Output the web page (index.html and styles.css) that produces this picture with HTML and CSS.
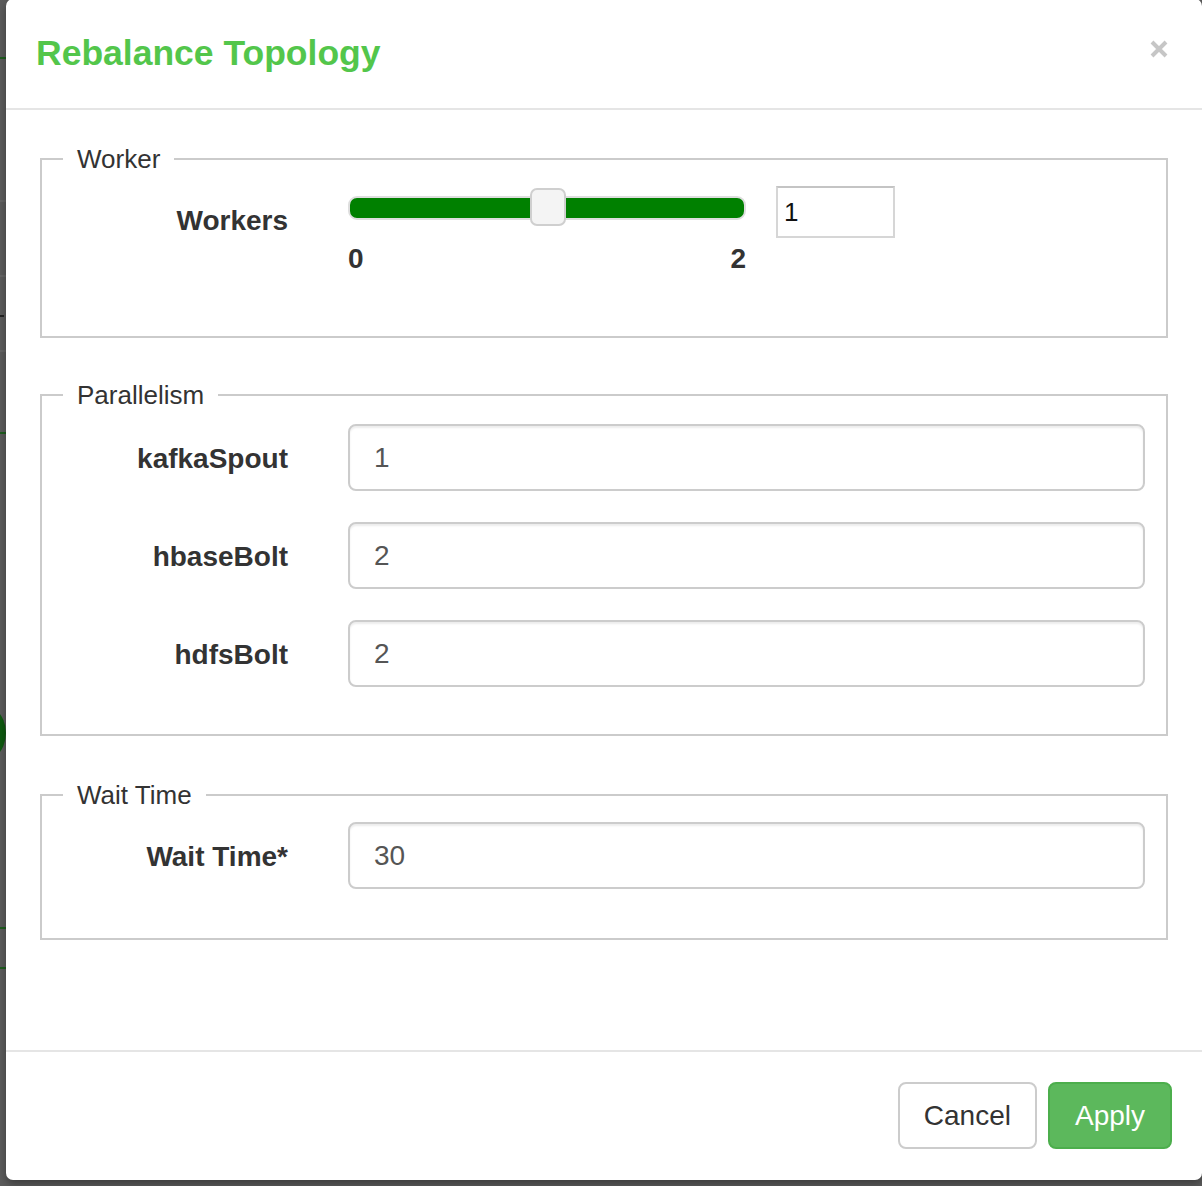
FILE: index.html
```html
<!DOCTYPE html>
<html lang="en">
<head>
<meta charset="utf-8">
<title>Rebalance Topology</title>
<link rel="stylesheet" href="styles.css">
</head>
<body>
<div class="backdrop" aria-hidden="true">
  <span class="bg-mark bg-green" style="top:57px"></span>
  <span class="bg-mark bg-light" style="top:200px"></span>
  <span class="bg-mark bg-light" style="top:275px"></span>
  <span class="bg-mark bg-black" style="top:315px"></span>
  <span class="bg-mark bg-light" style="top:350px"></span>
  <span class="bg-mark bg-green" style="top:432px"></span>
  <span class="bg-blob"></span>
  <span class="bg-mark bg-green" style="top:927px"></span>
  <span class="bg-mark bg-green" style="top:967px"></span>
</div>

<div class="modal" role="dialog">
  <div class="modal-header">
    <h4 class="modal-title">Rebalance Topology</h4>
    <button class="close" type="button" aria-label="Close">
      <svg width="18" height="18" viewBox="0 0 18 18"><path d="M2 2 L16 16 M16 2 L2 16" stroke="#c6c6c6" stroke-width="4" stroke-linecap="butt"/></svg>
    </button>
  </div>

  <div class="modal-body">
    <fieldset class="fs fs-worker">
      <legend>Worker</legend>
      <div class="worker-row">
        <label class="ctl-label">Workers</label>
        <div class="slider">
          <div class="slider-track"><span class="slider-handle"></span></div>
          <div class="slider-scale"><span>0</span><span>2</span></div>
        </div>
        <input class="num-input" type="text" value="1">
      </div>
    </fieldset>

    <fieldset class="fs fs-parallel">
      <legend>Parallelism</legend>
      <div class="form-rows">
        <div class="form-row">
          <label class="ctl-label">kafkaSpout</label>
          <input class="form-control" type="text" value="1">
        </div>
        <div class="form-row">
          <label class="ctl-label">hbaseBolt</label>
          <input class="form-control" type="text" value="2">
        </div>
        <div class="form-row">
          <label class="ctl-label">hdfsBolt</label>
          <input class="form-control" type="text" value="2">
        </div>
      </div>
    </fieldset>

    <fieldset class="fs fs-wait">
      <legend>Wait Time</legend>
      <div class="form-row">
        <label class="ctl-label">Wait Time*</label>
        <input class="form-control" type="text" value="30">
      </div>
    </fieldset>
  </div>

  <div class="modal-footer">
    <button class="btn btn-default" type="button">Cancel</button>
    <button class="btn btn-success" type="button">Apply</button>
  </div>
</div>
</body>
</html>
```
FILE: styles.css
```css
html, body {
  margin: 0;
  padding: 0;
}

body {
  width: 1202px;
  height: 1186px;
  overflow: hidden;
  background: #5c5c5c;
  font-family: "Liberation Sans", Arial, Helvetica, sans-serif;
  color: #333;
  position: relative;
}

/* obscured page behind the dialog */
.backdrop {
  position: absolute;
  inset: 0;
}
.bg-mark {
  position: absolute;
  left: 0;
  width: 6px;
  height: 2px;
}
.bg-green { background: #1f5f1f; }
.bg-light { background: #666; }
.bg-black { background: #222; height: 2px; width: 4px; }
.bg-blob {
  position: absolute;
  left: -60px;
  top: 700px;
  width: 66px;
  height: 66px;
  border-radius: 50%;
  background: #0e5a10;
}

/* dialog */
.modal {
  position: absolute;
  left: 6px;
  top: -1px;
  width: 1196px;
  height: 1181px;
  background: #fff;
  border-radius: 7px;
  box-shadow: 0 4px 10px rgba(0, 0, 0, 0.35);
  display: flex;
  flex-direction: column;
}

.modal-header {
  display: flex;
  justify-content: space-between;
  align-items: flex-start;
  padding: 35px 30px 36px 30px;
  border-bottom: 2px solid #e5e5e5;
}

.modal-title {
  margin: 0;
  font-size: 35.5px;
  line-height: 38px;
  font-weight: bold;
  color: #53c64b;
}

.close {
  border: 0;
  background: none;
  padding: 0;
  margin: 6px 4px 0 0;
  width: 18px;
  height: 18px;
  display: block;
  cursor: pointer;
}
.close svg { display: block; }

.modal-body {
  flex: 1;
  padding: 34px 34px 0 34px;
}

/* fieldsets */
.fs {
  border: 2px solid #cbcbcb;
  margin: 0;
  min-width: 0;
  padding: 12px 21px 61px 21px;
}
.fs legend {
  font-size: 26px;
  line-height: 30px;
  padding: 0 14px;
  color: #333;
}
.fs-parallel {
  margin-top: 42px;
  padding-top: 14px;
  padding-bottom: 47px;
}
.fs-wait {
  margin-top: 44px;
  padding-top: 12px;
  padding-bottom: 49px;
}

.ctl-label {
  font-size: 28px;
  line-height: 40px;
  font-weight: bold;
  color: #333;
  text-align: right;
  padding-top: 15px;
}

/* worker row */
.worker-row {
  display: grid;
  grid-template-columns: 225px 398px 119px;
  column-gap: 60px;
  align-items: start;
}
.worker-row .num-input { margin-left: -30px; }

.slider { padding-top: 10px; }
.slider-track {
  position: relative;
  height: 20px;
  background: #008000;
  border: 2px solid #dedede;
  border-radius: 9px;
}
.slider-handle {
  position: absolute;
  left: 180px;
  top: -10px;
  width: 32px;
  height: 34px;
  background: #f4f4f4;
  border: 2px solid #cfcfcf;
  border-radius: 7px;
}
.slider-scale {
  display: flex;
  justify-content: space-between;
  margin-top: 23px;
  font-size: 28px;
  line-height: 32px;
  font-weight: bold;
  color: #333;
}

.num-input {
  box-sizing: border-box;
  width: 119px;
  height: 52px;
  margin: 0;
  border: 2px solid #d6d6d6;
  border-top-color: #c4c4c4;
  padding: 0 6px;
  font-family: "Liberation Sans", Arial, sans-serif;
  font-size: 26px;
  color: #111;
  background: #fff;
  outline: none;
}

/* parallelism rows */
.form-rows {
  display: flex;
  flex-direction: column;
  gap: 31px;
}
.form-row {
  display: grid;
  grid-template-columns: 225px 1fr;
  column-gap: 60px;
  align-items: start;
}

.form-control {
  box-sizing: border-box;
  height: 67px;
  width: 100%;
  margin: 0;
  padding: 0 24px;
  border: 2px solid #cccccc;
  border-radius: 8px;
  box-shadow: inset 0 2px 2px rgba(0, 0, 0, 0.075);
  font-family: "Liberation Sans", Arial, sans-serif;
  font-size: 28px;
  color: #555;
  background: #fff;
  outline: none;
}

/* footer */
.modal-footer {
  display: flex;
  justify-content: flex-end;
  gap: 11px;
  padding: 30px 30px 31px 30px;
  border-top: 2px solid #e5e5e5;
}

.btn {
  height: 67px;
  padding: 0 24px;
  font-family: "Liberation Sans", Arial, sans-serif;
  font-size: 28px;
  line-height: 1;
  border-radius: 8px;
  border: 2px solid;
  cursor: pointer;
}
.btn-default {
  background: #fff;
  border-color: #cccccc;
  color: #333;
}
.btn-success {
  background: #5cb85c;
  border-color: #4cae4c;
  color: #fff;
  padding: 0 25px;
}
```
